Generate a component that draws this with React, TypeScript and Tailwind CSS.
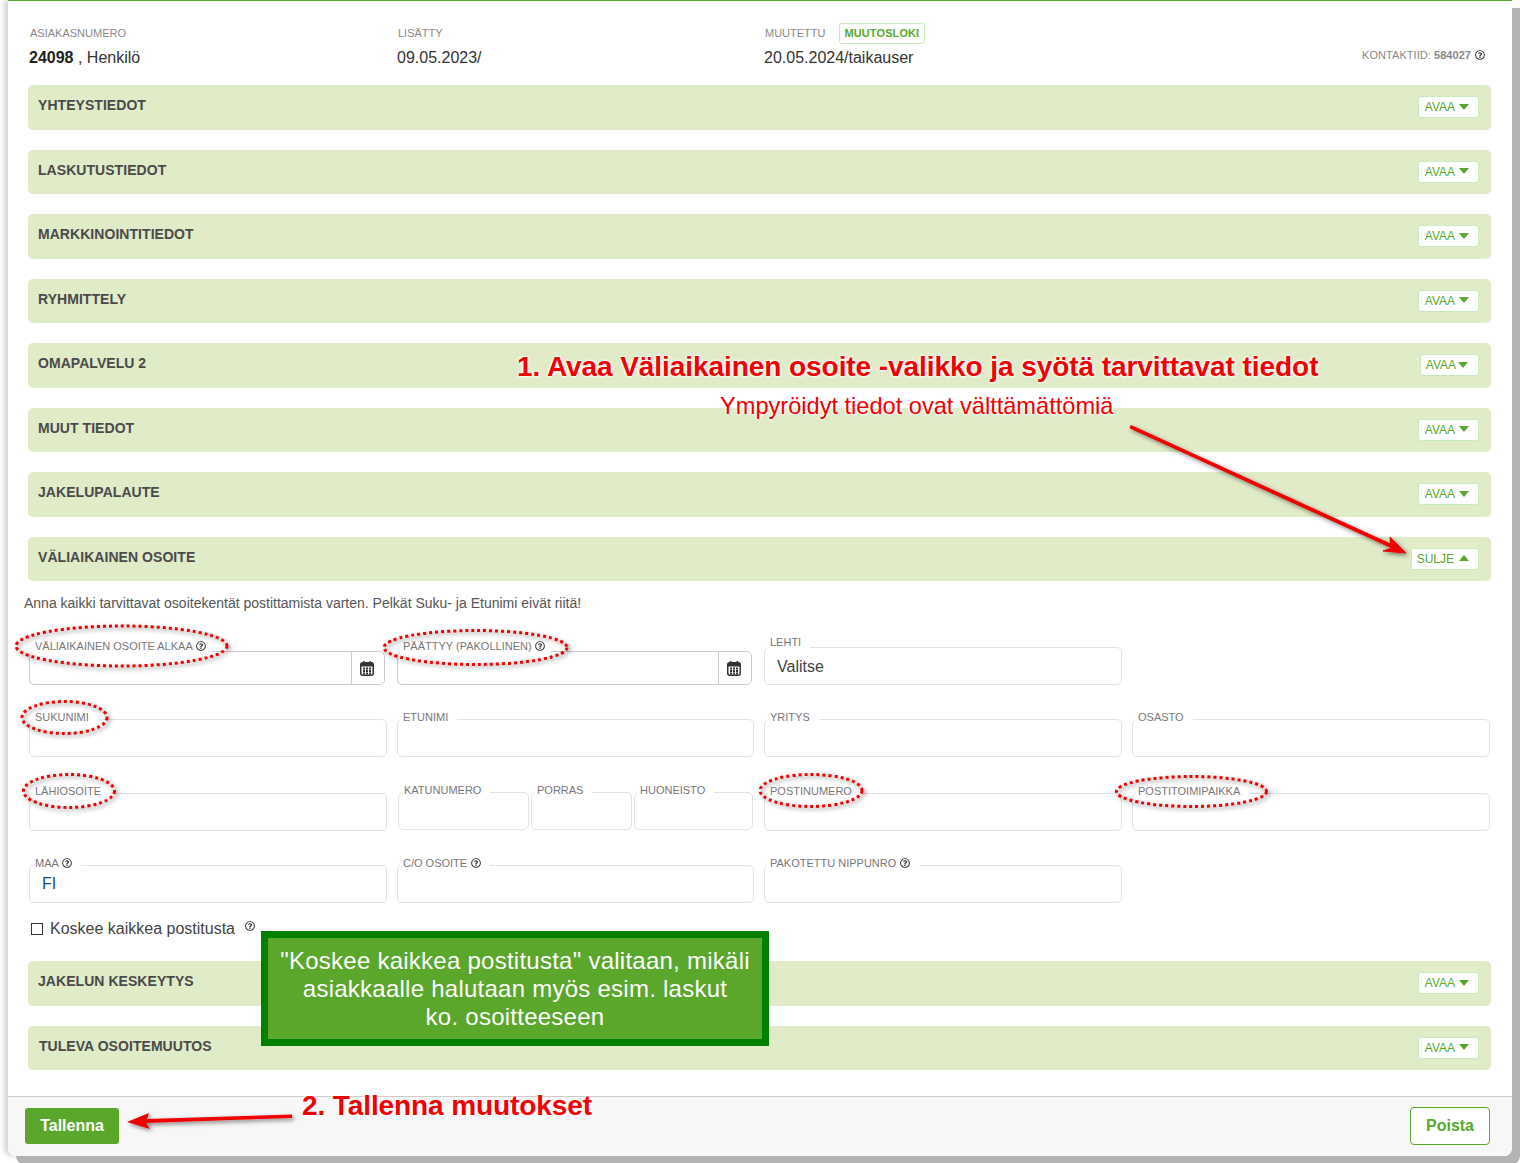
import type { ReactNode } from "react";
import { FaRegQuestionCircle } from "react-icons/fa";

const topSections = [
  "YHTEYSTIEDOT",
  "LASKUTUSTIEDOT",
  "MARKKINOINTITIEDOT",
  "RYHMITTELY",
  "OMAPALVELU 2",
  "MUUT TIEDOT",
  "JAKELUPALAUTE",
];

const ellipses = [
  { cx: 121.5, cy: 646, rx: 105.5, ry: 20 },
  { cx: 475.5, cy: 647.5, rx: 91.5, ry: 17 },
  { cx: 64.5, cy: 717.5, rx: 42.5, ry: 16 },
  { cx: 69, cy: 791, rx: 45.5, ry: 16.5 },
  { cx: 811, cy: 790.5, rx: 51, ry: 16 },
  { cx: 1191.5, cy: 791.5, rx: 75, ry: 15 },
];

const calendarCells = [
  [3, 6.5],
  [6, 6.5],
  [9, 6.5],
  [3, 9],
  [6, 9],
  [9, 9],
  [3, 11.5],
  [6, 11.5],
  [9, 11.5],
];

function Help({ className = "" }: { readonly className?: string }) {
  return <FaRegQuestionCircle size={10} className={`inline-block shrink-0 text-[#333] ${className}`} />;
}

function CalendarIcon() {
  return (
    <svg width="14" height="15" viewBox="0 0 14 15" aria-hidden="true">
      <path d="M3 0h1.500v2H3zM9.500 0H11v2H9.500z" fill="#333" />
      <rect x="0.75" y="1.75" width="12.5" height="12.5" rx="2" fill="#fff" stroke="#333" strokeWidth="1.5" />
      <rect x="1" y="2" width="12" height="3.5" fill="#333" />
      {calendarCells.map(([x, y]) => (
        <rect key={`${x}-${y}`} x={x} y={y} width="2" height="2" fill="#333" />
      ))}
    </svg>
  );
}

function Caret({ up }: { readonly up?: boolean }) {
  return (
    <svg width="10" height="6" viewBox="0 0 10 6" className="mb-[1px] shrink-0">
      <path d={up ? "M5 0 10 6H0Z" : "M0 0H10L5 6Z"} fill="#5aa72c" />
    </svg>
  );
}

function SectionBar({
  title,
  open,
  compact,
  className = "",
  titleClassName = "pl-[10px]",
}: {
  readonly title: string;
  readonly open?: boolean;
  readonly compact?: boolean;
  readonly className?: string;
  readonly titleClassName?: string;
}) {
  return (
    <div
      className={`flex h-[44.5px] items-start justify-between rounded-[5px] bg-[#e0ebc8] pr-[12px] ${className}`}
    >
      <h3 className={`pt-[12px] text-[14px] leading-[16px] font-bold tracking-[0.05px] text-[#4a4a4a] ${titleClassName}`}>
        {title}
      </h3>
      <button
        type="button"
        className={`mt-[11px] flex h-[22px] items-center rounded-[3px] border border-[#c9eabb] bg-white text-[12px] text-[#5aa72c] ${
          open
            ? "gap-[5px] pr-[9px] pl-[5px]"
            : compact
              ? "gap-[2px] pr-[10px] pl-[5px]"
              : "gap-[4px] pr-[9px] pl-[6px]"
        }`}
      >
        {open ? "SULJE" : "AVAA"}
        <Caret up={open} />
      </button>
    </div>
  );
}

function Field({
  label,
  children,
  className = "h-[38px]",
  labelClassName = "-top-[10px]",
}: {
  readonly label: ReactNode;
  readonly children?: ReactNode;
  readonly className?: string;
  readonly labelClassName?: string;
}) {
  return (
    <div className={`relative rounded-[5px] border border-[#e1e3e8] bg-white ${className}`}>
      <span
        className={`absolute left-[2px] flex items-center gap-[3px] bg-white pr-[9px] pl-[3px] text-[11px] leading-[14px] whitespace-nowrap text-[#777] ${labelClassName}`}
      >
        {label}
      </span>
      {children}
    </div>
  );
}

function DateField({ label, className }: { readonly label: string; readonly className: string }) {
  return (
    <div className={`relative flex h-[34px] rounded-[5px] border border-[#ccc] bg-white ${className}`}>
      <span className="absolute -top-[13px] left-[2px] flex items-center gap-[3px] bg-white pr-[6px] pl-[3px] text-[11px] leading-[14px] whitespace-nowrap text-[#777]">
        {label}
        <Help />
      </span>
      <div className="flex-1" />
      <div className="flex w-[33px] items-center justify-center border-l border-[#ccc] pt-[1px] pr-[2px]">
        <CalendarIcon />
      </div>
    </div>
  );
}

export default function App() {
  return (
    <div className="relative h-[1163px] w-[1520px] overflow-hidden bg-white font-['Liberation_Sans',Arial,sans-serif]">
      <div className="ml-[8px] flex h-[1156px] w-[1504px] flex-col rounded-b-[8px] border-t border-[#5aa72c] bg-white shadow-[8px_8px_0_#b3b3b3,-4px_0_5px_#d4d4d4]">
        <header className="relative ml-[21px] grid h-[84px] shrink-0 grid-cols-[368px_368px_1fr] pt-[25px]">
          <div>
            <p className="pl-[1px] text-[11px] leading-[14px] text-[#888]">ASIAKASNUMERO</p>
            <p className="mt-[9px] text-[16px] leading-[18px] text-[#333]">
              <b className="text-[#222]">24098</b> , Henkilö
            </p>
          </div>
          <div>
            <p className="pl-[1px] text-[11px] leading-[14px] text-[#888]">LISÄTTY</p>
            <p className="mt-[9px] text-[16px] leading-[18px] text-[#333]">09.05.2023/</p>
          </div>
          <div>
            <p className="flex h-[14px] items-center text-[11px] text-[#888]">
              MUUTETTU
              <span className="ml-[13px] flex h-[21px] items-center rounded-[3px] border border-[#c9eabb] px-[5px] text-[11px] font-bold tracking-[0.1px] text-[#5aa72c]">
                MUUTOSLOKI
              </span>
            </p>
            <p className="mt-[9px] -ml-[1px] text-[16px] leading-[18px] text-[#333]">20.05.2024/taikauser</p>
          </div>
          <p className="absolute top-[47px] right-[27px] flex items-center gap-[4px] text-[11px] leading-[14px] tracking-[0.05px] text-[#888]">
            <span>
              KONTAKTIID: <b>584027</b>
            </span>
            <Help />
          </p>
        </header>

        <div className="ml-[20px] w-[1463px]">
          {topSections.map((title) => (
            <SectionBar key={title} title={title} compact={title === "OMAPALVELU 2"} className="mb-[20px]" />
          ))}
          <SectionBar title="VÄLIAIKAINEN OSOITE" open />
        </div>

        <p className="mt-[12px] ml-[16px] text-[14px] leading-[20px] text-[#555]">
          Anna kaikki tarvittavat osoitekentät postittamista varten. Pelkät Suku- ja Etunimi eivät riitä!
        </p>

        <div className="mt-[0.5px] ml-[21px] grid w-[1461px] grid-cols-[358px_357px_358px_358px] gap-x-[10px]">
          <div className="mt-[33px] self-end">
            <DateField label="VÄLIAIKAINEN OSOITE ALKAA" className="w-[356px]" />
          </div>
          <div className="self-end">
            <DateField label="PÄÄTTYY (PAKOLLINEN)" className="w-[355px]" />
          </div>
          <div className="mt-[33px]">
            <Field label="LEHTI" labelClassName="-top-[13px]">
              <span className="absolute top-[10px] left-[12px] text-[16px] leading-[18px] text-[#444]">Valitse</span>
            </Field>
          </div>
          <div />

          <div className="mt-[34px]">
            <Field label="SUKUNIMI" />
          </div>
          <div className="mt-[34px]">
            <Field label="ETUNIMI" />
          </div>
          <div className="mt-[34px]">
            <Field label="YRITYS" />
          </div>
          <div className="mt-[34px]">
            <Field label="OSASTO" />
          </div>

          <div className="mt-[36px]">
            <Field label="LÄHIOSOITE" />
          </div>
          <div className="mt-[35px] ml-[1px] flex gap-[2px]">
            <Field label="KATUNUMERO" className="h-[38px] w-[131px]" />
            <Field label="PORRAS" className="h-[38px] w-[101px]" />
            <Field label="HUONEISTO" className="h-[38px] w-[119px]" />
          </div>
          <div className="mt-[36px]">
            <Field label="POSTINUMERO" />
          </div>
          <div className="mt-[36px]">
            <Field label="POSTITOIMIPAIKKA" />
          </div>

          <div className="mt-[34px]">
            <Field
              label={
                <>
                  MAA <Help />
                </>
              }
            >
              <span className="absolute top-[9px] left-[12px] text-[16px] leading-[18px] text-[#1a4f7a]">FI</span>
            </Field>
          </div>
          <div className="mt-[34px]">
            <Field
              label={
                <>
                  C/O OSOITE <Help className="ml-[1px]" />
                </>
              }
            />
          </div>
          <div className="mt-[34px]">
            <Field
              label={
                <>
                  PAKOTETTU NIPPUNRO <Help className="ml-[1px]" />
                </>
              }
            />
          </div>
        </div>

        <label className="mt-[16px] ml-[23px] flex h-[20px] items-center text-[16px] text-[#444]">
          <span className="h-[12px] w-[12px] border border-[#333] bg-white" />
          <span className="ml-[7px]">Koskee kaikkea postitusta</span>
          <span className="mb-[5px] ml-[10px] flex">
            <Help />
          </span>
        </label>

        <div className="mt-[22.6px] ml-[20px] w-[1463px]">
          <SectionBar title="JAKELUN KESKEYTYS" className="mb-[20px]" />
          <SectionBar title="TULEVA OSOITEMUUTOS" titleClassName="pl-[11px]" />
        </div>

        <footer className="mt-auto flex h-[60px] items-center justify-between rounded-b-[8px] border-t border-[#ccc] bg-[#f7f7f7] pr-[22px] pb-[1px] pl-[17px]">
          <button
            type="button"
            className="h-[36px] w-[94px] rounded-[3px] bg-[#5aa72c] text-[16px] font-bold text-white"
          >
            Tallenna
          </button>
          <button
            type="button"
            className="h-[38px] w-[80px] rounded-[4px] border border-[#5aa72c] bg-white text-[16px] font-bold text-[#5aa72c]"
          >
            Poista
          </button>
        </footer>
      </div>

      {/* annotations drawn on top of the screenshot */}
      <svg className="pointer-events-none absolute inset-0" width="1520" height="1163" viewBox="0 0 1520 1163">
        <defs>
          <filter id="soft" x="-20%" y="-20%" width="140%" height="140%">
            <feDropShadow dx="2" dy="2" stdDeviation="2" floodColor="#000" floodOpacity="0.5" />
          </filter>
        </defs>
        {ellipses.map((e) => (
          <ellipse
            key={e.cx}
            {...e}
            fill="none"
            stroke="#ee0000"
            strokeWidth="3"
            strokeDasharray="3 3"
            filter="url(#soft)"
          />
        ))}
        <g filter="url(#soft)" fill="#f00000">
          <path d="M1131 425.500 1130 428 1392 548 1383 551 1406 553 1390 537 1390.500 544Z" stroke="#f00000" strokeWidth="1" />
          <path d="M292 1114.500 292 1118 146 1123 150 1129 127 1122 149 1113 147 1119Z" />
        </g>
      </svg>

      <p className="absolute top-[350px] left-[517px] text-[28px] leading-[34px] font-bold tracking-[-0.065px] whitespace-nowrap text-[#f00000] [text-shadow:0_0_3px_#fff,0_0_3px_#fff,0_0_3px_#fff]">
        1. Avaa Väliaikainen osoite -valikko ja syötä tarvittavat tiedot
      </p>
      <p className="absolute top-[391px] left-[720px] text-[23.6px] leading-[30px] whitespace-nowrap text-[#f00000] [text-shadow:0_0_3px_#fff,0_0_3px_#fff,0_0_3px_#fff]">
        Ympyröidyt tiedot ovat välttämättömiä
      </p>
      <p className="absolute top-[1089px] left-[302px] text-[28px] leading-[34px] font-bold tracking-[-0.1px] whitespace-nowrap text-[#f00000] [text-shadow:0_0_3px_#fff,0_0_3px_#fff,0_0_3px_#fff]">
        2. Tallenna muutokset
      </p>
      <div className="absolute top-[931px] left-[261px] flex h-[115px] w-[508px] items-center justify-center border-[7px] border-[#008000] bg-[#5aa72c] text-center text-[24px] leading-[28px] tracking-[0.25px] text-white">
        <p>
          "Koskee kaikkea postitusta" valitaan, mikäli
          <br />
          asiakkaalle halutaan myös esim. laskut
          <br />
          ko. osoitteeseen
        </p>
      </div>
    </div>
  );
}
